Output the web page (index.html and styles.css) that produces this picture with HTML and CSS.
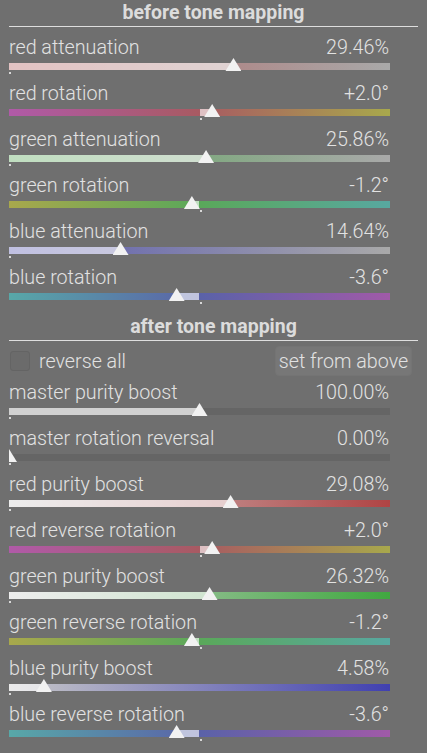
FILE: index.html
```html
<!DOCTYPE html>
<html>
<head>
<meta charset="utf-8">
<link rel="stylesheet" href="styles.css">
</head>
<body>
<div class="panel">
  <div class="section-title">before tone mapping</div>

  <div class="slider">
    <div class="head"><span class="label">red attenuation</span><span class="value">29.46%</span></div>
    <div class="wrap">
      <div class="track g-red-att"><div class="fill" style="left:0;width:58.92%"></div></div>
      <div class="marker" style="left:0"></div>
      <div class="thumb" style="left:58.92%"></div>
    </div>
  </div>

  <div class="slider">
    <div class="head"><span class="label">red rotation</span><span class="value">+2.0°</span></div>
    <div class="wrap">
      <div class="track g-red-rot"><div class="fill" style="left:50%;width:3.33%"></div></div>
      <div class="marker" style="left:50%"></div>
      <div class="thumb" style="left:53.33%"></div>
    </div>
  </div>

  <div class="slider">
    <div class="head"><span class="label">green attenuation</span><span class="value">25.86%</span></div>
    <div class="wrap">
      <div class="track g-green-att"><div class="fill" style="left:0;width:51.72%"></div></div>
      <div class="marker" style="left:0"></div>
      <div class="thumb" style="left:51.72%"></div>
    </div>
  </div>

  <div class="slider">
    <div class="head"><span class="label">green rotation</span><span class="value">-1.2°</span></div>
    <div class="wrap">
      <div class="track g-green-rot"><div class="fill" style="left:48%;width:2%"></div></div>
      <div class="marker" style="left:50%"></div>
      <div class="thumb" style="left:48%"></div>
    </div>
  </div>

  <div class="slider">
    <div class="head"><span class="label">blue attenuation</span><span class="value">14.64%</span></div>
    <div class="wrap">
      <div class="track g-blue-att"><div class="fill" style="left:0;width:29.28%"></div></div>
      <div class="marker" style="left:0"></div>
      <div class="thumb" style="left:29.28%"></div>
    </div>
  </div>

  <div class="slider">
    <div class="head"><span class="label">blue rotation</span><span class="value">-3.6°</span></div>
    <div class="wrap">
      <div class="track g-blue-rot"><div class="fill" style="left:44%;width:6%"></div></div>
      <div class="marker" style="left:50%"></div>
      <div class="thumb" style="left:44%"></div>
    </div>
  </div>

  <div class="section-title second">after tone mapping</div>

  <div class="options">
    <label class="check"><span class="box"></span><span class="check-text">reverse all</span></label>
    <button class="btn">set from above</button>
  </div>

  <div class="slider">
    <div class="head"><span class="label">master purity boost</span><span class="value">100.00%</span></div>
    <div class="wrap">
      <div class="track g-master"><div class="fill fill-strong" style="left:0;width:50%"></div></div>
      <div class="marker" style="left:0"></div>
      <div class="thumb" style="left:50%"></div>
    </div>
  </div>

  <div class="slider">
    <div class="head"><span class="label">master rotation reversal</span><span class="value">0.00%</span></div>
    <div class="wrap">
      <div class="track g-master"></div>
      <div class="marker" style="left:0"></div>
      <div class="thumb" style="left:0"></div>
    </div>
  </div>

  <div class="slider">
    <div class="head"><span class="label">red purity boost</span><span class="value">29.08%</span></div>
    <div class="wrap">
      <div class="track g-red-pur"><div class="fill" style="left:0;width:58.16%"></div></div>
      <div class="marker" style="left:0"></div>
      <div class="thumb" style="left:58.16%"></div>
    </div>
  </div>

  <div class="slider">
    <div class="head"><span class="label">red reverse rotation</span><span class="value">+2.0°</span></div>
    <div class="wrap">
      <div class="track g-red-rot"><div class="fill" style="left:50%;width:3.33%"></div></div>
      <div class="marker" style="left:50%"></div>
      <div class="thumb" style="left:53.33%"></div>
    </div>
  </div>

  <div class="slider">
    <div class="head"><span class="label">green purity boost</span><span class="value">26.32%</span></div>
    <div class="wrap">
      <div class="track g-green-pur"><div class="fill" style="left:0;width:52.64%"></div></div>
      <div class="marker" style="left:0"></div>
      <div class="thumb" style="left:52.64%"></div>
    </div>
  </div>

  <div class="slider">
    <div class="head"><span class="label">green reverse rotation</span><span class="value">-1.2°</span></div>
    <div class="wrap">
      <div class="track g-green-rot"><div class="fill" style="left:48%;width:2%"></div></div>
      <div class="marker" style="left:50%"></div>
      <div class="thumb" style="left:48%"></div>
    </div>
  </div>

  <div class="slider">
    <div class="head"><span class="label">blue purity boost</span><span class="value">4.58%</span></div>
    <div class="wrap">
      <div class="track g-blue-pur"><div class="fill" style="left:0;width:9.16%"></div></div>
      <div class="marker" style="left:0"></div>
      <div class="thumb" style="left:9.16%"></div>
    </div>
  </div>

  <div class="slider">
    <div class="head"><span class="label">blue reverse rotation</span><span class="value">-3.6°</span></div>
    <div class="wrap">
      <div class="track g-blue-rot"><div class="fill" style="left:44%;width:6%"></div></div>
      <div class="marker" style="left:50%"></div>
      <div class="thumb" style="left:44%"></div>
    </div>
  </div>
</div>
</body>
</html>
```

FILE: styles.css
```css
html, body {
  margin: 0;
  padding: 0;
  background: #6f6f6f;
}
body {
  font-family: Roboto, "Liberation Sans", sans-serif;
  color: #e2e2e2;
  width: 427px;
  height: 753px;
  overflow: hidden;
}
.panel {
  padding: 0 9px;
  width: 409px;
}
.section-title {
  font-weight: 700;
  font-size: 19.5px;
  line-height: 26px;
  text-align: center;
  color: #dcdcdc;
  border-bottom: 1px solid #dedede;
  margin-bottom: 11px;
}
.section-title.second {
  margin-bottom: 0;
}
.slider {
  width: 381px;
  margin-bottom: 9px;
}
.head {
  display: flex;
  justify-content: space-between;
  height: 20px;
  line-height: 20px;
  font-size: 19.7px;
  font-weight: 300;
  white-space: nowrap;
}
.value {
  padding-right: 1px;
}
.wrap {
  position: relative;
  height: 17px;
  padding-top: 5px;
  box-sizing: border-box;
  overflow: hidden;
}
.track {
  position: relative;
  height: 7px;
}
.fill {
  position: absolute;
  top: 0;
  bottom: 0;
  background: rgba(255, 255, 255, 0.62);
}
.fill-strong {
  background: rgba(255, 255, 255, 0.7);
}
.marker {
  position: absolute;
  top: 14px;
  width: 2px;
  height: 2px;
  background: #d8d8d8;
}
.thumb {
  position: absolute;
  top: 0;
  width: 16px;
  height: 13px;
  margin-left: -8px;
  background: #f2f2f2;
  clip-path: polygon(50% 0, 100% 100%, 0 100%);
}
.g-red-att { background: linear-gradient(to right, #b46060, #a9a9a9); }
.g-green-att { background: linear-gradient(to right, #5aa85a, #a9a9a9); }
.g-blue-att { background: linear-gradient(to right, #5a5ab0, #a9a9a9); }
.g-red-rot { background: linear-gradient(to right, #b05aa8, #a85a62 50%, #a8a84c); }
.g-green-rot { background: linear-gradient(to right, #a8a84c, #5aa85a 50%, #58a8a0); }
.g-blue-rot { background: linear-gradient(to right, #58a8a8, #5a62a8 50%, #a05aa8); }
.g-master { background: #656565; }
.g-red-pur { background: linear-gradient(to right, #d0d0d0, #b04444); }
.g-green-pur { background: linear-gradient(to right, #d0d0d0, #40a840); }
.g-blue-pur { background: linear-gradient(to right, #c8c8c8, #4040b0); }
.options {
  display: flex;
  justify-content: space-between;
  align-items: center;
  height: 30px;
  margin: 5px 0 7px;
}
.check {
  display: flex;
  align-items: center;
  font-size: 19.7px;
  font-weight: 300;
  padding-left: 1px;
}
.box {
  width: 18px;
  height: 18px;
  border: 1px solid #646464;
  border-radius: 3px;
  background: #6b6b6b;
  margin-right: 9px;
}
.btn {
  font-family: Roboto, "Liberation Sans", sans-serif;
  font-size: 19.7px;
  font-weight: 300;
  color: #e2e2e2;
  background: #777777;
  border: 1px solid #747474;
  border-radius: 4px;
  height: 30px;
  width: 137px;
  padding: 0;
  margin-right: 6px;
}
```
